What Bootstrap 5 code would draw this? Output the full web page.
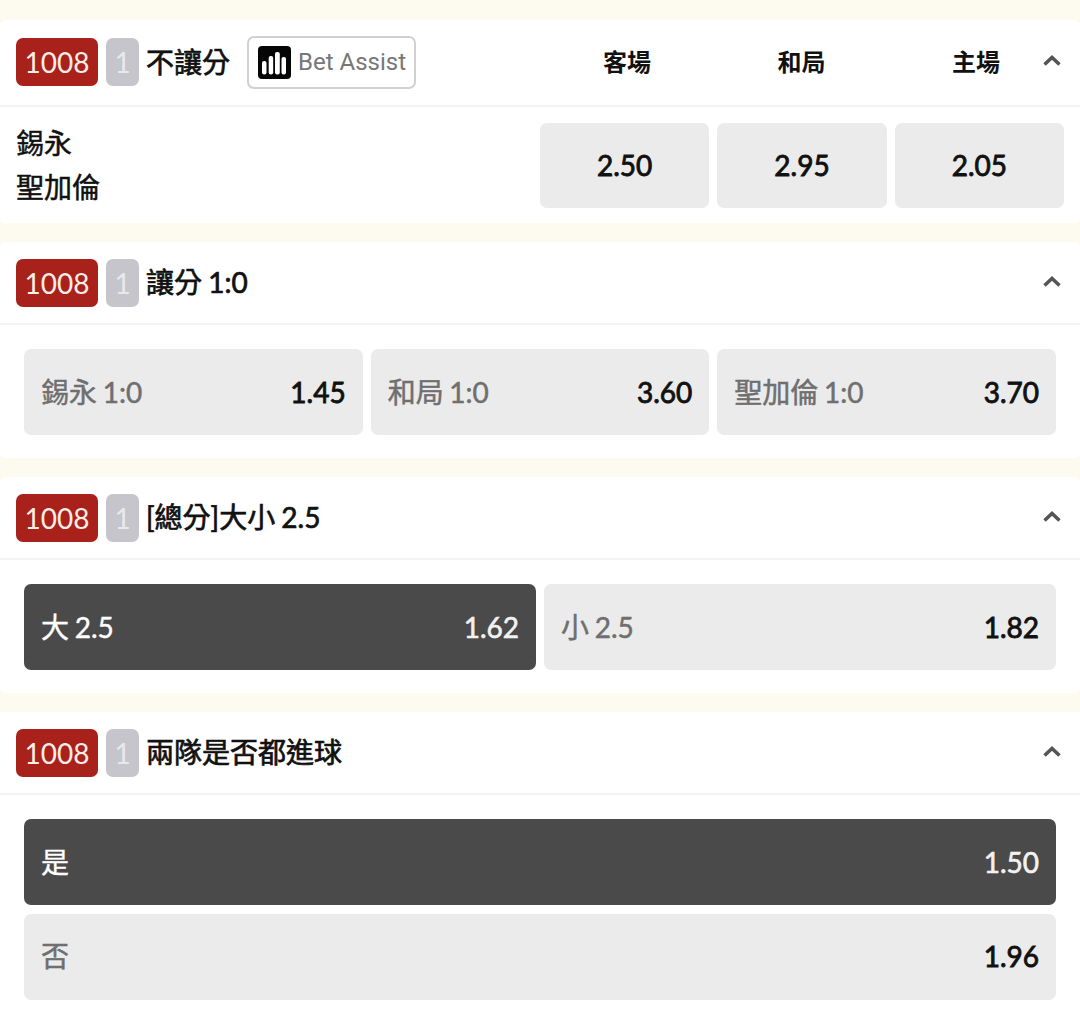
<!DOCTYPE html>
<html lang="zh-Hant">
<head>
<meta charset="utf-8">
<title>Markets</title>
<link href="https://cdn.jsdelivr.net/npm/bootstrap@5.3.0/dist/css/bootstrap.min.css" rel="stylesheet">
<style>
html, body { height: 1016px; overflow: hidden; }
body { background: #fdfaf0; font-family: Lato, "Noto Sans CJK TC", sans-serif; font-size: 28px; color: #111; padding-top: 20px; }
.mkt { background: #fff; margin-bottom: 19px; border-radius: 6px; }
.mkt:last-child { margin-bottom: 0; border-radius: 0; height: 304px; }
.mkt-head { padding: 0 18px 0 16px; border-bottom: 2px solid #f3f3f3; }
.h-first { height: 87px; padding-bottom: 1px; }
.h-std { height: 83px; }
.code-tag { background: #a8211a; color: #fbeee6; width: 82px; height: 48px; border-radius: 7px; font-size: 28px; }
.num-tag { background: #c5c5cb; color: #e9e9ec; width: 33px; height: 48px; border-radius: 7px; margin-left: 8px; font-size: 28px; }
.mkt-title { margin-left: 7px; padding-bottom: 1px; font-size: 28px; line-height: 1; word-spacing: -1px; -webkit-text-stroke: .7px #111; white-space: nowrap; }
.assist { margin-left: 17px; width: 169px; height: 53px; border: 2px solid #d0d0d0; border-radius: 7px; background: #fff; color: #777; font-family: Roboto, sans-serif; font-size: 24px; padding: 0 0 0 9px; gap: 7px; white-space: nowrap; }
.assist svg { width: 33px; height: 33px; flex: none; }
.col-label { text-align: center; font-size: 24px; font-weight: 700; line-height: 1; }
.col-labels { margin-left: auto; margin-right: 42px; gap: 126.5px; }
.chev { width: 20px; height: 14px; flex: none; }
.teams { font-size: 28px; line-height: 44px; -webkit-text-stroke: .5px #111; padding: 0 0 1px 16px; }
.first-body { height: 116px; padding: 16px 16px 15px 0; }
.odd-row { gap: 8px; width: 524px; height: 85px; }
.odd-box { background: #ebebeb; border-radius: 7px; flex: 1 1 0; height: 85px; padding-bottom: 2px; font-size: 28px; color: #111; -webkit-text-stroke: .85px #111; }
.pick-wrap { padding: 24px 24px 23px; gap: 8.5px; }
.pick-row { gap: 8px; }
.pick { flex: 1 1 0; height: 86px; background: #ebebeb; border-radius: 7px; padding: 0 17px 1px; color: #111; }
.pick-wrap > .pick { flex: none; }
.pick-name { color: #6f6f6f; font-size: 28px; word-spacing: -1.5px; -webkit-text-stroke: .5px #6f6f6f; }
.pick-odd { font-size: 28px; -webkit-text-stroke: .85px #111; }
.pick.on { background: #4a4a4a; color: #fff; }
.pick.on .pick-name { color: #fff; -webkit-text-stroke: .4px #fff; }
.pick.on .pick-odd { color: #f2f2f2; -webkit-text-stroke: .6px #f2f2f2; }
</style>
</head>
<body>

<section class="mkt">
  <div class="mkt-head h-first d-flex align-items-center">
    <span class="code-tag d-flex align-items-center justify-content-center">1008</span>
    <span class="num-tag d-flex align-items-center justify-content-center">1</span>
    <span class="mkt-title">不讓分</span>
    <button type="button" class="assist d-flex align-items-center">
      <svg viewBox="0 0 33 33" aria-hidden="true"><rect width="33" height="33" rx="4" fill="#050505"/><rect x="4" y="15" width="4.500" height="13.500" rx="2" fill="#fff"/><rect x="10.700" y="10" width="4.500" height="18.500" rx="2" fill="#fff"/><rect x="17" y="6" width="4.800" height="22.500" rx="2" fill="#fff"/><rect x="23.500" y="11" width="4.500" height="17.500" rx="2" fill="#fff"/></svg>
      Bet Assist
    </button>
    <div class="col-labels d-flex">
      <span class="col-label">客場</span><span class="col-label">和局</span><span class="col-label">主場</span>
    </div>
    <svg class="chev" viewBox="0 0 20 14" aria-hidden="true"><path d="M2.500 9.500 10 2.500l7.500 7" fill="none" stroke="#555" stroke-width="3.500"/></svg>
  </div>
  <div class="first-body d-flex justify-content-between align-items-center">
    <div class="teams">錫永<br>聖加倫</div>
    <div class="odd-row d-flex">
      <div class="odd-box d-flex align-items-center justify-content-center">2.50</div>
      <div class="odd-box d-flex align-items-center justify-content-center">2.95</div>
      <div class="odd-box d-flex align-items-center justify-content-center">2.05</div>
    </div>
  </div>
</section>

<section class="mkt">
  <div class="mkt-head h-std d-flex align-items-center">
    <span class="code-tag d-flex align-items-center justify-content-center">1008</span>
    <span class="num-tag d-flex align-items-center justify-content-center">1</span>
    <span class="mkt-title">讓分 1:0</span>
    <svg class="chev ms-auto" viewBox="0 0 20 14" aria-hidden="true"><path d="M2.500 9.500 10 2.500l7.500 7" fill="none" stroke="#555" stroke-width="3.500"/></svg>
  </div>
  <div class="pick-wrap d-flex flex-column">
    <div class="pick-row d-flex">
      <div class="pick d-flex align-items-center justify-content-between"><span class="pick-name">錫永 1:0</span><span class="pick-odd">1.45</span></div>
      <div class="pick d-flex align-items-center justify-content-between"><span class="pick-name">和局 1:0</span><span class="pick-odd">3.60</span></div>
      <div class="pick d-flex align-items-center justify-content-between"><span class="pick-name">聖加倫 1:0</span><span class="pick-odd">3.70</span></div>
    </div>
  </div>
</section>

<section class="mkt">
  <div class="mkt-head h-std d-flex align-items-center">
    <span class="code-tag d-flex align-items-center justify-content-center">1008</span>
    <span class="num-tag d-flex align-items-center justify-content-center">1</span>
    <span class="mkt-title">[總分]大小 2.5</span>
    <svg class="chev ms-auto" viewBox="0 0 20 14" aria-hidden="true"><path d="M2.500 9.500 10 2.500l7.500 7" fill="none" stroke="#555" stroke-width="3.500"/></svg>
  </div>
  <div class="pick-wrap d-flex flex-column">
    <div class="pick-row d-flex">
      <div class="pick on d-flex align-items-center justify-content-between"><span class="pick-name">大 2.5</span><span class="pick-odd">1.62</span></div>
      <div class="pick d-flex align-items-center justify-content-between"><span class="pick-name">小 2.5</span><span class="pick-odd">1.82</span></div>
    </div>
  </div>
</section>

<section class="mkt">
  <div class="mkt-head h-std d-flex align-items-center">
    <span class="code-tag d-flex align-items-center justify-content-center">1008</span>
    <span class="num-tag d-flex align-items-center justify-content-center">1</span>
    <span class="mkt-title">兩隊是否都進球</span>
    <svg class="chev ms-auto" viewBox="0 0 20 14" aria-hidden="true"><path d="M2.500 9.500 10 2.500l7.500 7" fill="none" stroke="#555" stroke-width="3.500"/></svg>
  </div>
  <div class="pick-wrap d-flex flex-column">
    <div class="pick on d-flex align-items-center justify-content-between"><span class="pick-name">是</span><span class="pick-odd">1.50</span></div>
    <div class="pick d-flex align-items-center justify-content-between"><span class="pick-name">否</span><span class="pick-odd">1.96</span></div>
  </div>
</section>

</body>
</html>
